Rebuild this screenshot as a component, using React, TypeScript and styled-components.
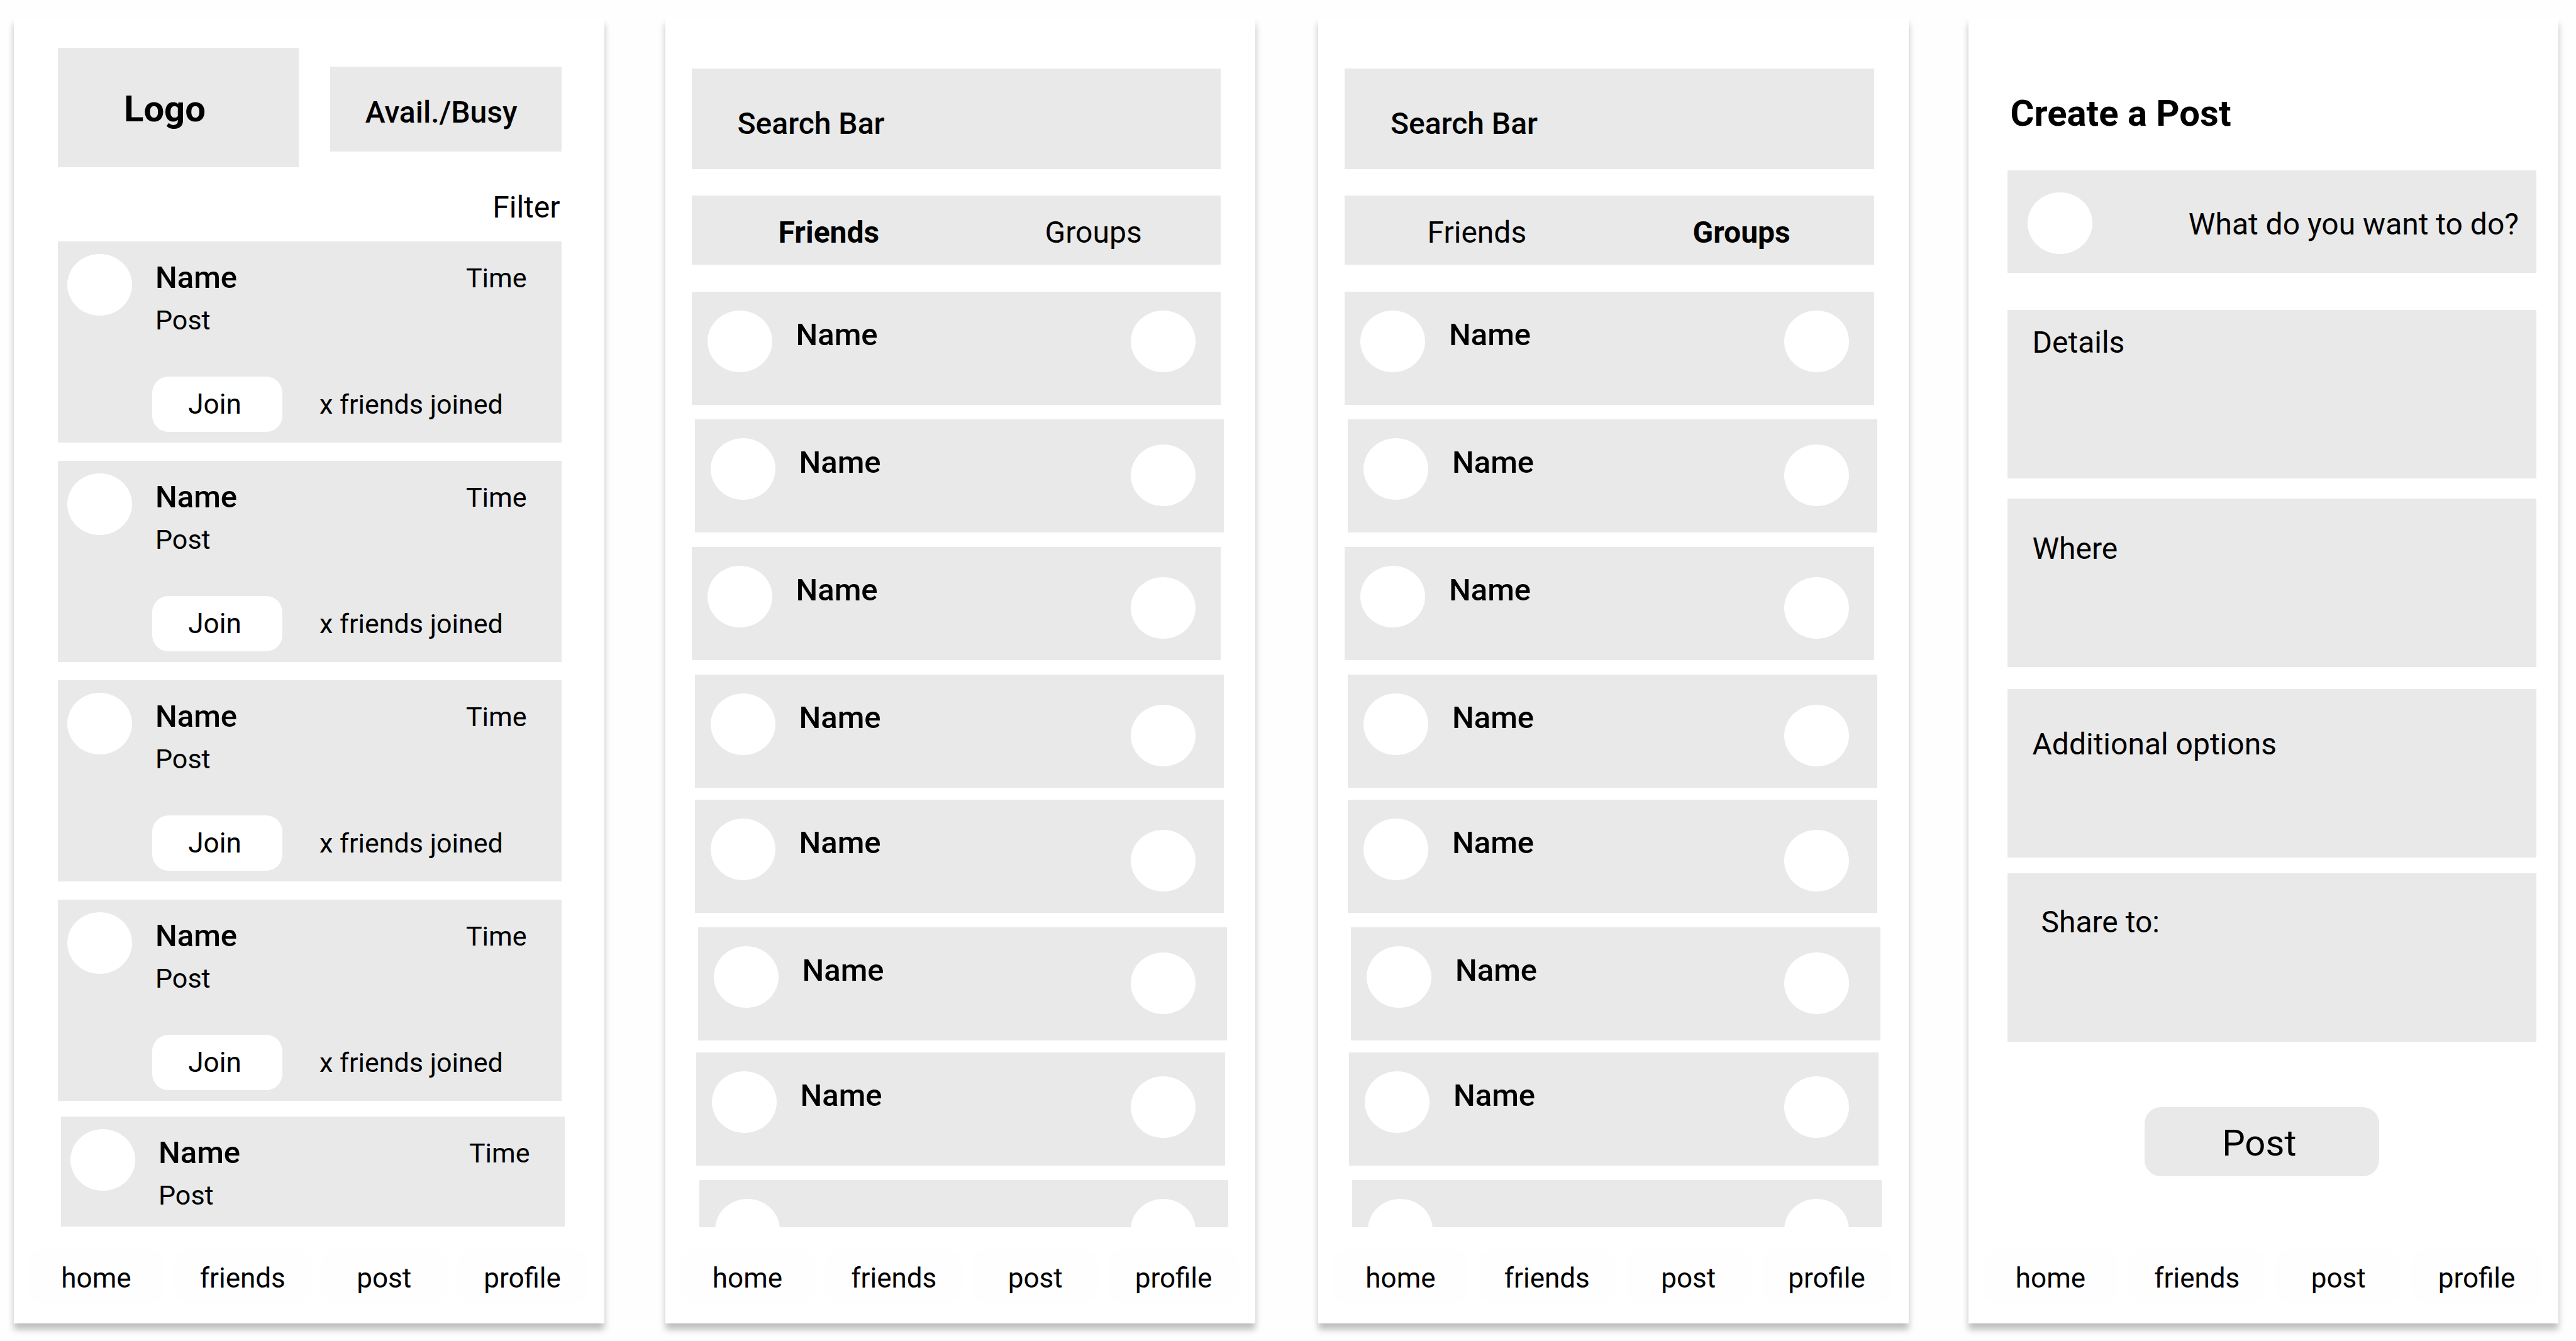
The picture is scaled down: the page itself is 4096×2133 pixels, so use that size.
import React from "react";
import styled, { createGlobalStyle } from "styled-components";

const GREY = "#e9e9e9";

const GlobalStyle = createGlobalStyle`
  *, *::before, *::after { box-sizing: border-box; }
  body { margin: 0; background: #fefefe; color: #000; font-family: Roboto, "Liberation Sans", sans-serif; }
  button, input, textarea { border: 0; margin: 0; padding: 0; font: inherit; color: inherit; background: none; border-radius: 0; }
  button { cursor: pointer; }
  h1, h2, p { margin: 0; }
  a { color: inherit; text-decoration: none; }
`;

const Board = styled.main`
  display: flex;
  padding: 28px 28px 28px 22px;
`;

const Screen = styled.section<{ $gap?: number }>`
  flex: 1 1 0;
  min-width: 0;
  min-height: calc(100vh - 56px);
  margin-left: ${(p) => p.$gap ?? 0}px;
  display: flex;
  flex-direction: column;
  background: #fff;
  box-shadow: 0 10px 10px rgba(0, 0, 0, 0.25);
`;

/* Type */
const Heading = styled.h1`
  font-size: 58px;
  line-height: 68px;
  font-weight: 700;
`;

const Name = styled.h2`
  font-size: 49px;
  line-height: 56px;
  font-weight: 500;
`;

const Body = styled.p`
  font-size: 43px;
  line-height: 52px;
`;

const Ellipse = styled.span`
  flex: none;
  display: block;
  width: 103px;
  height: 98px;
  border-radius: 50%;
  background: #fff;
`;

/* Bottom navigation */
const NavBar = styled.nav`
  margin-top: auto;
  padding: 34px 18px 31px 15px;
  display: grid;
  grid-template-columns: 232fr 234fr 216fr 224fr;
`;

const NavLink = styled.a`
  display: flex;
  align-items: center;
  justify-content: center;
  height: 88px;
  margin: 0 8px;
  padding-top: 6px;
  border-radius: 26px;
  background: #fefefe;
  font-size: 44px;
  line-height: 52px;
`;

/* Feed screen */
const FeedHeader = styled.header`
  display: grid;
  grid-template-columns: 383fr 368fr;
  align-items: start;
  gap: 50px;
  padding: 48px 68px 0 70px;
`;

const LogoBox = styled.div`
  height: 190px;
  display: flex;
  align-items: center;
  padding: 4px 0 0 105px;
  background: ${GREY};
`;

const StatusButton = styled.button`
  height: 135px;
  margin-top: 30px;
  padding: 10px 0 0 56px;
  text-align: left;
  background: ${GREY};
  font-size: 48px;
  line-height: 56px;
  font-weight: 500;
`;

const FilterButton = styled.button`
  align-self: flex-end;
  margin: 36px 70px 26px 0;
  font-size: 48px;
  line-height: 56px;
`;

const Feed = styled.div`
  display: flex;
  flex-direction: column;
  gap: 29px;
  padding: 0 68px 0 70px;
`;

const PostCard = styled.article<{ $last?: boolean }>`
  display: flex;
  align-items: flex-start;
  gap: 32px;
  padding: 20px 0 ${(p) => (p.$last ? 24 : 17)}px 15px;
  margin: ${(p) => (p.$last ? "-4px -5px 0 5px" : "0")};
  background: ${GREY};
`;

const PostBody = styled.div`
  flex: 1;
  padding-top: 10px;
`;

const PostHead = styled.div`
  display: flex;
  justify-content: space-between;
  align-items: center;
  padding: 0 55px 0 5px;
`;

const PostText = styled(Body)`
  padding: 13px 0 0 5px;
`;

const PostActions = styled.div`
  display: flex;
  align-items: center;
  gap: 59px;
  margin-top: 64px;
`;

const JoinButton = styled.button`
  width: 207px;
  height: 88px;
  padding-right: 8px;
  border-radius: 26px;
  background: #fff;
  font-size: 44px;
  line-height: 52px;
`;

/* Friends and groups screens */
const People = styled.div`
  display: flex;
  flex-direction: column;
  padding: 81px 55px 0 42px;
`;

const SearchInput = styled.input`
  width: 100%;
  height: 160px;
  padding: 14px 40px 0 73px;
  background: ${GREY};
  font-size: 48px;
  font-weight: 500;
  &::placeholder { color: #000; opacity: 1; }
`;

const Tabs = styled.div<{ $inset: number }>`
  display: grid;
  grid-template-columns: 1fr 1fr;
  column-gap: ${(p) => p.$inset}px;
  height: 110px;
  margin: 42px 0 43px;
  padding: 8px 0 0 ${(p) => p.$inset}px;
  background: ${GREY};
`;

const Tab = styled.button<{ $active: boolean }>`
  font-size: 48px;
  line-height: 56px;
  font-weight: ${(p) => (p.$active ? 700 : 400)};
`;

const Rows = styled.div`
  display: flex;
  flex-direction: column;
  gap: 23px;
`;

const Row = styled.article<{ $shift: number; $tight?: boolean; $peek?: boolean }>`
  display: flex;
  align-items: flex-start;
  height: ${(p) => (p.$peek ? 75 : 180)}px;
  overflow: hidden;
  margin: ${(p) => (p.$tight ? -4 : 0)}px ${(p) => -p.$shift}px 0 ${(p) => p.$shift}px;
  padding: 30px ${(p) => 40 + p.$shift}px 0 25px;
  background: ${GREY};
`;

const RowName = styled(Name)`
  flex: 1;
  padding: 11px 0 0 38px;
`;

const RowAction = styled.button<{ $drop: number }>`
  flex: none;
  width: 103px;
  height: 98px;
  margin-top: ${(p) => p.$drop}px;
  border-radius: 50%;
  background: #fff;
`;

/* Create a post screen */
const Form = styled.form`
  display: flex;
  flex-direction: column;
  padding: 118px 35px 0 62px;
`;

const FormTitle = styled(Heading)`
  padding-left: 5px;
`;

const Prompt = styled.div`
  display: flex;
  align-items: center;
  height: 163px;
  margin: 57px 0 59px;
  padding: 4px 28px 0 32px;
  background: ${GREY};
`;

const PromptInput = styled.input`
  flex: 1;
  min-width: 0;
  height: 100px;
  padding-top: 4px;
  font-size: 48px;
  text-align: right;
  &::placeholder { color: #000; opacity: 1; }
`;

const Fields = styled.div`
  display: flex;
  flex-direction: column;
`;

const Field = styled.div<{ $top: number; $left: number; $gap: number }>`
  display: flex;
  flex-direction: column;
  height: 268px;
  margin-bottom: ${(p) => p.$gap}px;
  padding: ${(p) => p.$top}px 40px 0 ${(p) => p.$left}px;
  background: ${GREY};
`;

const FieldLabel = styled.label`
  font-size: 48px;
  line-height: 56px;
`;

const FieldInput = styled.textarea`
  flex: 1;
  min-height: 0;
  resize: none;
  font-size: 44px;
  line-height: 52px;
`;

const SubmitButton = styled.button`
  align-self: center;
  width: 373px;
  height: 110px;
  margin: 104px 32px 0 0;
  padding: 4px 8px 0 0;
  border-radius: 26px;
  background: ${GREY};
  font-size: 58px;
  line-height: 68px;
`;

const navItems = ["home", "friends", "post", "profile"];

const rows = [
  { shift: 0, drop: 0 },
  { shift: 5, drop: 10 },
  { shift: 0, drop: 18 },
  { shift: 5, drop: 18 },
  { shift: 5, drop: 18, tight: true },
  { shift: 10, drop: 10 },
  { shift: 7, drop: 8, tight: true },
  { shift: 12, drop: 0, peek: true },
];

const fields = [
  { id: "details", label: "Details", top: 24, left: 40, gap: 32 },
  { id: "where", label: "Where", top: 52, left: 40, gap: 35 },
  { id: "options", label: "Additional options", top: 60, left: 40, gap: 25 },
  { id: "share", label: "Share to:", top: 50, left: 54, gap: 0 },
];

function BottomNav() {
  return (
    <NavBar aria-label="Main">
      {navItems.map((item) => (
        <NavLink key={item} href={`#${item}`}>{item}</NavLink>
      ))}
    </NavBar>
  );
}

function Post({ last }: { last?: boolean }) {
  return (
    <PostCard $last={last}>
      <Ellipse />
      <PostBody>
        <PostHead>
          <Name>Name</Name>
          <Body>Time</Body>
        </PostHead>
        <PostText>Post</PostText>
        {!last && (
          <PostActions>
            <JoinButton type="button">Join</JoinButton>
            <Body>x friends joined</Body>
          </PostActions>
        )}
      </PostBody>
    </PostCard>
  );
}

function FeedScreen() {
  return (
    <Screen>
      <FeedHeader>
        <LogoBox><Heading>Logo</Heading></LogoBox>
        <StatusButton type="button">Avail./Busy</StatusButton>
      </FeedHeader>
      <FilterButton type="button">Filter</FilterButton>
      <Feed>
        {[0, 1, 2, 3].map((i) => <Post key={i} />)}
        <Post last />
      </Feed>
      <BottomNav />
    </Screen>
  );
}

function PeopleScreen({ active, gap, inset }: { active: string; gap: number; inset: number }) {
  return (
    <Screen $gap={gap}>
      <People>
        <SearchInput type="text" aria-label="Search" placeholder="Search Bar" />
        <Tabs $inset={inset}>
          {["Friends", "Groups"].map((tab) => (
            <Tab key={tab} type="button" $active={tab === active}>{tab}</Tab>
          ))}
        </Tabs>
        <Rows>
          {rows.map((row, i) => (
            <Row key={i} $shift={row.shift} $tight={row.tight} $peek={row.peek}>
              <Ellipse />
              <RowName>{row.peek ? "" : "Name"}</RowName>
              <RowAction type="button" aria-label="Open" $drop={row.drop} />
            </Row>
          ))}
        </Rows>
      </People>
      <BottomNav />
    </Screen>
  );
}

function CreateScreen() {
  return (
    <Screen $gap={95}>
      <Form>
        <FormTitle>Create a Post</FormTitle>
        <Prompt>
          <Ellipse />
          <PromptInput type="text" aria-label="Activity" placeholder="What do you want to do?" />
        </Prompt>
        <Fields>
          {fields.map((f) => (
            <Field key={f.id} $top={f.top} $left={f.left} $gap={f.gap}>
              <FieldLabel htmlFor={f.id}>{f.label}</FieldLabel>
              <FieldInput id={f.id} />
            </Field>
          ))}
        </Fields>
        <SubmitButton type="button">Post</SubmitButton>
      </Form>
      <BottomNav />
    </Screen>
  );
}

export default function App() {
  return (
    <>
      <GlobalStyle />
      <Board>
        <FeedScreen />
        <PeopleScreen active="Friends" gap={97} inset={16} />
        <PeopleScreen active="Groups" gap={100} inset={0} />
        <CreateScreen />
      </Board>
    </>
  );
}
